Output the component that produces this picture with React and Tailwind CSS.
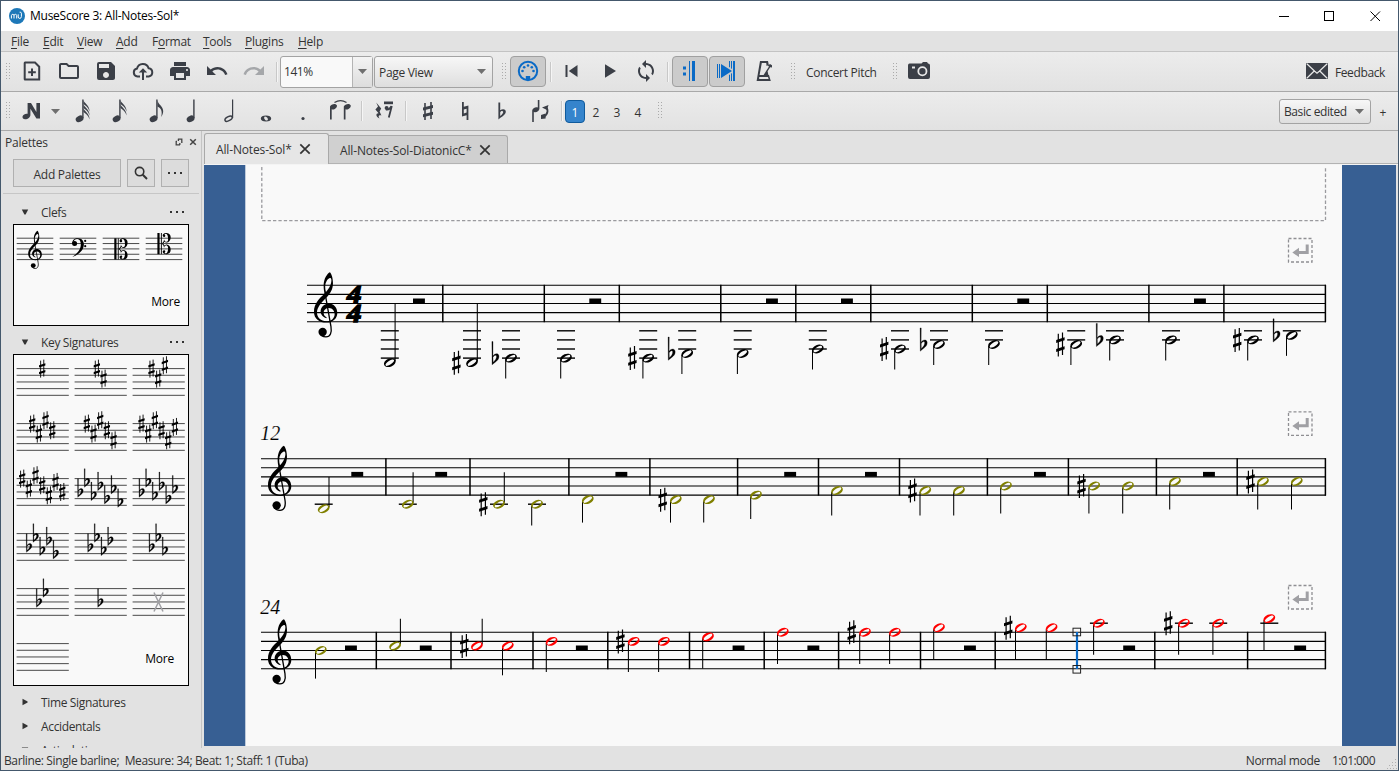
import React from 'react';
import {
  MdOutlineFolder,
  MdSave,
  MdPrint,
  MdUndo,
  MdRedo,
  MdSync,
} from 'react-icons/md';

const INK = '#3b3f47';
const BLUE = '#0a6ac6';
const OLIVE = '#808000';
const RED = '#ff0000';

/* ---------- Music glyphs, drawn for a staff space of 9.1px ---------- */

const HEAD =
  'M-5.66,2.28A6.1,4.1 -22 1 1 5.66,-2.28A6.1,4.1 -22 1 1 -5.66,2.28ZM-4.1,2.6A4.9,1.7 -33 1 0 4.1,-2.6A4.9,1.7 -33 1 0 -4.1,2.6Z';

function Sharp({ x, y, s = 1 }) {
  return (
    <g transform={`translate(${x} ${y}) scale(${s})`}>
      <path d="M-2.1,-10.6V12M2.1,-12V10.6" stroke="#000" strokeWidth="1.2" fill="none" />
      <path d="M-4.2,-3.4L4.2,-6.2V-3.2L-4.2,-.4ZM-4.2,5.6L4.2,2.8V5.8L-4.2,8.6Z" transform="translate(0 -1)" />
    </g>
  );
}

function Flat({ x, y, s = 1 }) {
  return (
    <g transform={`translate(${x} ${y}) scale(${s})`}>
      <path
        fillRule="evenodd"
        stroke="#000"
        strokeWidth="0.3"
        d="M0,-16.5H1.1L1,-2.2C2.2,-3.9 3.9,-4.7 5.3,-4.4C7.5,-3.8 7.6,-.6 6,1.6C4.6,3.5 2.2,4.8 .2,6.7ZM1.1,-.8L1.2,4.2C3.2,2.5 4.9,.1 4.6,-1.9C4.4,-3.5 2.3,-3 1.1,-.8Z"
      />
    </g>
  );
}

function TrebleClef({ x, y, s = 1 }) {
  return (
    <g transform={`translate(${x} ${y}) scale(${s / 3})`}>
      <path
        fillRule="evenodd"
        d="M50,-121C42,-118 31,-101 31,-82C31,-72 32,-64 34,-57C18,-42 2,-27 2,-2C2,18 18,30 39,30C59,30 72,17 72,1C72,-15 61,-27 47,-27C32,-27 22,-15 22,-3C22,7 30,14 39,17L40,14C34,11 31,6 31,1C31,-8 38,-14 47,-14C58,-14 64,-4 64,4C64,18 53,26 39,26C23,26 11,15 11,0C11,-16 24,-30 38,-44C51,-56 59,-70 59,-88C59,-103 55,-116 50,-121ZM38,-62C35,-73 34,-85 40,-95C44,-102 52,-108 54,-100C56,-89 48,-72 38,-62Z"
      />
      <path d="M35,-60L53,42C56,60 51,73 38,73C29,73 22,68 20,60" fill="none" stroke="#000" strokeWidth="4" />
      <circle cx="28" cy="58" r="12.5" />
    </g>
  );
}

function Rest({ x, top }) {
  return <rect x={x} y={top + 13.2} width="11.9" height="4.8" />;
}

function Note({ x, p, top, color = '#000', up, end, len = 20.5, acc, ax }) {
  const y = top + p * 4.55;
  const ledgers = [];
  for (let k = 10; k <= p; k += 2) ledgers.push(k);
  for (let k = -2; k >= p; k -= 2) ledgers.push(k);
  const stop = end ?? y + len;
  return (
    <g>
      {ledgers.map((k) => (
        <path key={k} d={`M${x - 9},${top + k * 4.55}h18`} stroke="#000" strokeWidth="1.4" />
      ))}
      <path
        d={up ? `M${x + 5.3},${y - 1.5}V${up}` : `M${x - 5.3},${y + 1.5}V${stop}`}
        stroke="#000"
        strokeWidth="1.05"
      />
      <path transform={`translate(${x} ${y})`} d={HEAD} fill={color} fillRule="evenodd" />
      {acc === '#' && <Sharp x={ax} y={y} />}
      {acc === 'b' && <Flat x={ax} y={y} />}
    </g>
  );
}

const SYSTEMS = [
  {
    top: 285.3,
    left: 307,
    clef: 313.3,
    time: true,
    bars: [442.8, 544.3, 619.3, 720.8, 795.8, 870.8, 972.3, 1047.3, 1148.9, 1223.9, 1325.4],
    rests: [413, 589.3, 766, 841, 1017.3, 1194],
    notes: [
      { x: 389.8, p: 17, up: 303.5 },
      { x: 472, p: 17, up: 303.5, acc: '#', ax: 456.4 },
      { x: 511, p: 16, acc: 'b', ax: 491.9 },
      { x: 566, p: 16 },
      { x: 648.2, p: 16, acc: '#', ax: 632.4 },
      { x: 687.2, p: 15, acc: 'b', ax: 668.1 },
      { x: 742.7, p: 15 },
      { x: 817.8, p: 14 },
      { x: 900, p: 14, acc: '#', ax: 884.2 },
      { x: 939, p: 13, acc: 'b', ax: 920.1 },
      { x: 994, p: 13 },
      { x: 1076.2, p: 13, acc: '#', ax: 1060.4 },
      { x: 1115, p: 12, acc: 'b', ax: 1096.2 },
      { x: 1171, p: 12 },
      { x: 1253, p: 12, acc: '#', ax: 1237.2 },
      { x: 1291.8, p: 11, acc: 'b', ax: 1273 },
    ],
  },
  {
    top: 458.7,
    left: 261,
    clef: 267.3,
    number: '12',
    bars: [385.9, 470, 568.9, 649.9, 737.6, 818.5, 899.5, 987.4, 1068.4, 1156.4, 1237.2, 1325.4],
    rests: [351.3, 435.2, 615.4, 784.2, 865, 1034, 1203],
    notes: [
      { x: 323.7, p: 11, up: 477, color: OLIVE },
      { x: 407.8, p: 10, up: 472.3, color: OLIVE },
      { x: 499, p: 10, up: 472.3, color: OLIVE, acc: '#', ax: 483.3 },
      { x: 537, p: 10, end: 525.6, color: OLIVE },
      { x: 587.8, p: 9, end: 522.6, color: OLIVE },
      { x: 675.8, p: 9, end: 522.6, color: OLIVE, acc: '#', ax: 662.7 },
      { x: 709, p: 9, end: 522.6, color: OLIVE },
      { x: 756, p: 8, end: 519, color: OLIVE },
      { x: 837, p: 7, end: 515.5, color: OLIVE },
      { x: 925.3, p: 7, end: 515.5, color: OLIVE, acc: '#', ax: 912.5 },
      { x: 959, p: 7, end: 515.5, color: OLIVE },
      { x: 1006, p: 6, end: 513.5, color: OLIVE },
      { x: 1094.2, p: 6, end: 513.5, color: OLIVE, acc: '#', ax: 1081.5 },
      { x: 1128, p: 6, end: 513.5, color: OLIVE },
      { x: 1175, p: 5, end: 509.5, color: OLIVE },
      { x: 1263, p: 5, end: 509.5, color: OLIVE, acc: '#', ax: 1250.5 },
      { x: 1296.8, p: 5, end: 509.5, color: OLIVE },
    ],
  },
  {
    top: 632.3,
    left: 261,
    clef: 267.3,
    number: '24',
    bars: [376.3, 451, 533, 607.8, 689.5, 764.2, 838.6, 920.5, 995.2, 1154.8, 1247.6, 1325.4],
    rests: [345, 419.8, 575.9, 732.6, 807.4, 964, 1123.2, 1294.2],
    notes: [
      { x: 320.8, p: 4, end: 678.6, color: OLIVE },
      { x: 395.1, p: 3, up: 618.8, color: OLIVE },
      { x: 476.9, p: 3, up: 618.8, color: RED, acc: '#', ax: 464.3 },
      { x: 507.8, p: 3, end: 675.3, color: RED },
      { x: 551.6, p: 2, end: 672, color: RED },
      { x: 633.7, p: 2, end: 672, color: RED, acc: '#', ax: 620.4 },
      { x: 663.9, p: 2, end: 672, color: RED },
      { x: 708, p: 1, end: 668.6, color: RED },
      { x: 782.8, p: 0, end: 664, color: RED },
      { x: 865, p: 0, end: 664, color: RED, acc: '#', ax: 851.7 },
      { x: 894.9, p: 0, end: 664, color: RED },
      { x: 939, p: -1, end: 659.4, color: RED },
      { x: 1020.8, p: -1, end: 659.4, color: RED, acc: '#', ax: 1008.2 },
      { x: 1051.6, p: -1, end: 659.4, color: RED },
      { x: 1098.9, p: -2, end: 654.7, color: RED },
      { x: 1183.9, p: -2, end: 654.7, color: RED, acc: '#', ax: 1168.2 },
      { x: 1218.2, p: -2, end: 654.7, color: RED },
      { x: 1269.3, p: -3, end: 650, color: RED },
    ],
  },
];

function System({ sys }) {
  const { top, left } = sys;
  const bottom = top + 36.4;
  return (
    <g>
      {[0, 1, 2, 3, 4].map((k) => (
        <path key={k} d={`M${left},${top + k * 9.1}H1326`} stroke="#000" strokeWidth="1.1" />
      ))}
      {sys.bars.map((x) => (
        <path key={x} d={`M${x},${top - 0.5}V${bottom + 0.5}`} stroke="#000" strokeWidth="1.5" />
      ))}
      <TrebleClef x={sys.clef} y={top + 27.3} />
      {sys.time &&
        [18, 36.2].map((dy) => (
          <text
            key={dy}
            transform={`translate(354.2 ${top + dy}) scale(1.12 1)`}
            textAnchor="middle"
            fontFamily="Liberation Serif, serif"
            fontWeight="700"
            fontStyle="italic"
            fontSize="26"
            stroke="#000"
            strokeWidth="1.3"
          >
            4
          </text>
        ))}
      {sys.number && (
        <text
          x="260.3"
          y={top - 18.6}
          fontFamily="Liberation Serif, serif"
          fontStyle="italic"
          fontSize="20"
          stroke="#f9f9f9"
          strokeWidth="0.12"
        >
          {sys.number}
        </text>
      )}
      {sys.rests.map((x) => (
        <Rest key={x} x={x} top={top} />
      ))}
      {sys.notes.map((n) => (
        <Note key={n.x} top={top} {...n} />
      ))}
      <g transform={`translate(1288.5 ${top - 46.8})`}>
        <rect width="23.5" height="23.5" fill="none" stroke="#8f8f93" strokeWidth="1.3" strokeDasharray="3 2" />
        <path d="M3.8,14L10.5,9.3V12.4H17.2V6H20.2V15.4H10.5V18.6Z" fill="#a0a0a4" />
      </g>
    </g>
  );
}

function Score() {
  return (
    <svg className="block shrink-0" width="1192" height="581" viewBox="204 165 1192 581">
      <rect x="204" y="165" width="1192" height="581" fill="#375f93" />
      <rect x="245.3" y="165" width="1096.7" height="581" fill="#f9f9f9" />
      <path d="M261.8,167V220.6H1325.5V167" fill="none" stroke="#9a9a9e" strokeWidth="1.3" strokeDasharray="3.3 2.1" />
      {SYSTEMS.map((s) => (
        <System key={s.top} sys={s} />
      ))}
      <path d="M1077,632V669" stroke={BLUE} strokeWidth="2.2" />
      <rect x="1073" y="628.2" width="7.6" height="7.6" fill="none" stroke="#222" />
      <rect x="1073" y="665.5" width="7.6" height="7.6" fill="none" stroke="#222" />
    </svg>
  );
}

/* ---------- Palettes ---------- */

function CellStaff({ x1, x2, top, gap }) {
  return [0, 1, 2, 3, 4].map((k) => (
    <path key={k} d={`M${x1},${top + k * gap}H${x2}`} stroke="#4a4a4a" strokeWidth="1" />
  ));
}

function CClef({ x, y }) {
  return (
    <g transform={`translate(${x} ${y})`}>
      <rect x="0" y="-10.6" width="2.2" height="21.2" />
      <rect x="3.5" y="-10.6" width=".9" height="21.2" />
      {[1, -1].map((d) => (
        <g key={d} transform={`scale(1 ${d})`}>
          <path
            fillRule="evenodd"
            d="M4.4,-.2C6,-1.4 6.4,-2.6 6.6,-4.2C7.2,-2.2 8.6,-1.6 9.4,-1.8C10.9,-2.3 10.8,-4.4 10.6,-6.2C10.3,-8.8 9.4,-10 8.2,-9.8C7.5,-9.7 7.1,-9.3 7.3,-8.8C8.4,-8.2 8,-6.6 6.8,-6.6C5.4,-6.6 5,-8 5.5,-9C6.2,-10.4 7.8,-10.8 9.3,-10.6C12,-10.3 13.4,-8.5 13.3,-6C13.2,-3 11.3,-.8 9,-1C8.1,-1.1 7.5,-1.6 7,-1.9C6.6,-1 6,-.4 5.4,0H4.4Z"
          />
        </g>
      ))}
    </g>
  );
}

function ClefCell({ kind }) {
  return (
    <svg width="43" height="50" viewBox="0 0 43 50">
      <CellStaff x1={2.7} x2={39.3} top={13.2} gap={5.35} />
      {kind === 'treble' && <TrebleClef x={13.8} y={29.3} s={0.585} />}
      {kind === 'bass' && (
        <g>
          <circle cx="17.6" cy="18.6" r="2.5" />
          <path d="M15.2,18.5C15,15.2 17.8,13 21,13.2C25.2,13.4 27.3,16.5 26.8,20.5C26.2,25.6 21.5,29.8 15.3,32C20,28.8 23.6,24.8 23.8,19.8C23.9,16.5 22.8,14.1 20.3,14.1C18.1,14.1 16.3,15.6 16.4,18Z" />
          <circle cx="28.2" cy="15.9" r="1.1" />
          <circle cx="28.2" cy="21.2" r="1.1" />
        </g>
      )}
      {kind === 'alto' && <CClef x={14.3} y={23.9} />}
      {kind === 'tenor' && <CClef x={14.4} y={18.6} />}
    </svg>
  );
}

const SHARPS = [0, 3, -1, 2, 5, 1, 4];
const FLATS = [4, 1, 5, 2, 6, 3, 7];

function KeyCell({ n = 0, cross }) {
  const count = Math.abs(n);
  const list = (n > 0 ? SHARPS : FLATS).slice(0, count);
  const start = 28.5 - ((count - 1) * 6.68) / 2;
  return (
    <svg width="58" height="55" viewBox="0 0 58 55">
      <CellStaff x1={2.6} x2={54.8} top={13.6} gap={6.68} />
      {list.map((p, i) =>
        n > 0 ? (
          <Sharp key={i} x={start + i * 6.68 - 0.3} y={13.6 + p * 3.34} s={0.75} />
        ) : (
          <Flat key={i} x={start + i * 6.68 - 2.9} y={13.6 + p * 3.34} s={0.8} />
        ),
      )}
      {cross && <path d="M24,17.5L33,36.5M33,17.5L24,36.5" stroke="#a0a0a4" strokeWidth="1.5" />}
    </svg>
  );
}

const KEYS = [1, 2, 3, 4, 5, 6, 7, -7, -6, -5, -4, -3, -2, -1];

function Dots({ className = '' }) {
  return (
    <svg className={className} width="16" height="4" viewBox="0 0 16 4" fill="#333">
      <rect x="1" y="1" width="2" height="2" />
      <rect x="7" y="1" width="2" height="2" />
      <rect x="13" y="1" width="2" height="2" />
    </svg>
  );
}

function PaletteHead({ label, open }) {
  return (
    <div className="flex h-6 shrink-0 items-center pl-[20px] pr-[16px]">
      <svg className="shrink-0" width="8" height="8" viewBox="0 0 8 8" fill="#333">
        {open ? <path d="M.8,1.5H7.2L4.6,6.6H3.4Z" /> : <path d="M1.5,.8V7.2L6.6,4.6V3.4Z" />}
      </svg>
      <span className="ml-[12px] flex-1 pt-px">{label}</span>
      {open && <Dots />}
    </div>
  );
}

function Sidebar() {
  return (
    <aside className="-mb-[2px] flex w-[201px] shrink-0 flex-col overflow-hidden border-r border-[#c4c4c4] tracking-[-0.35px]">
      <div className="flex h-[22px] shrink-0 items-center pl-1">
        <span className="flex-1 pt-0.5 tracking-[-0.25px]">Palettes</span>
        <svg width="8" height="8" viewBox="0 0 8 8" fill="none" stroke="#444" strokeWidth="1.3">
          <path d="M3,1.2H6.8V5M5,6.8H1.2V3M3.4,.8V3M.8,3.4H2M4.8,5V7" />
        </svg>
        <svg className="ml-[6px] mr-[4px]" width="8" height="8" viewBox="0 0 8 8" stroke="#444" strokeWidth="1.5">
          <path d="M1.2,1.2L6.8,6.8M6.8,1.2L1.2,6.8" />
        </svg>
      </div>
      <div className="mt-1.5 flex h-7 shrink-0 gap-1.5 pl-3">
        <button className="w-[108px] border border-[#b0b0b0] bg-[#dcdcdc] pt-[3px] tracking-[-0.25px]">Add Palettes</button>
        <button className="flex w-7 items-center justify-center border border-[#b0b0b0] bg-[#dcdcdc]">
          <svg width="14" height="14" viewBox="0 0 14 14" fill="none" stroke="#333" strokeWidth="1.6">
            <circle cx="5.6" cy="5.6" r="4.2" />
            <path d="M8.8,8.8L13,13" strokeWidth="2" />
          </svg>
        </button>
        <button className="flex w-7 items-center justify-center border border-[#b0b0b0] bg-[#dcdcdc]">
          <Dots />
        </button>
      </div>
      <div className="ml-0.5 mr-0.5 mt-1.5 h-px shrink-0 bg-[#c6c6c6]" />
      <div className="mt-[6px] flex min-h-0 flex-1 flex-col overflow-hidden">
        <PaletteHead label="Clefs" open />
        <div className="ml-3 h-[102px] w-[176px] shrink-0 border border-black bg-[#f9f9f9] text-black">
          <div className="flex h-[69px]">
            <ClefCell kind="treble" />
            <ClefCell kind="bass" />
            <ClefCell kind="alto" />
            <ClefCell kind="tenor" />
          </div>
          <div className="pr-[8px] text-right tracking-[-0.2px]">More</div>
        </div>
        <div className="mt-1">
          <PaletteHead label="Key Signatures" open />
        </div>
        <div className="ml-3 grid h-[332px] w-[176px] shrink-0 grid-cols-3 content-start border border-black bg-[#f9f9f9] text-black">
          {KEYS.map((n) => (
            <KeyCell key={n} n={n} />
          ))}
          <KeyCell cross />
          <KeyCell />
          <span />
          <div className="pr-[14px] pt-[21px] text-right tracking-[-0.2px]">More</div>
        </div>
        <div className="mt-1 flex shrink-0 flex-col">
          <PaletteHead label="Time Signatures" />
          <PaletteHead label="Accidentals" />
          <PaletteHead label="Articulations" open />
        </div>
      </div>
    </aside>
  );
}

/* ---------- Toolbars ---------- */

function Handle({ className = '' }) {
  return (
    <svg className={`shrink-0 ${className}`} width="6" height="18" viewBox="0 0 6 18" fill="#aaaaaa">
      {[0, 1, 2, 3, 4, 5].map((k) => (
        <g key={k}>
          <rect x="0" y={k * 3} width="1" height="1" />
          <rect x="3" y={k * 3} width="1" height="1" />
        </g>
      ))}
    </svg>
  );
}

function Sep({ className = '' }) {
  return <span className={`h-5 w-0.5 shrink-0 border-l border-r border-l-[#c8c8c8] border-r-[#f5f5f5] ${className}`} />;
}

function Slot({ children, className = 'w-[37px]' }) {
  return <span className={`flex h-8 shrink-0 items-center justify-center ${className}`}>{children}</span>;
}

function Icon({ children, w = 24, h = 24, fill = INK }) {
  return (
    <svg width={w} height={h} viewBox={`0 0 ${w} ${h}`} fill={fill}>
      {children}
    </svg>
  );
}

function Caret() {
  return (
    <svg width="9" height="5" viewBox="0 0 9 5" fill="#6f6f6f">
      <path d="M0,0H9L4.5,5Z" />
    </svg>
  );
}

const ON = 'h-[31px] w-[36px] rounded-sm border border-[#a0a0a0] bg-[#cbcbcb]';

function FileBar() {
  return (
    <div className="flex h-10 shrink-0 items-center border-b border-[#a9a9a9] bg-gradient-to-b from-[#ececec] to-[#e2e2e2] pl-[5px] [&>span>svg]:mb-px">
      <Handle className="mr-[1px]" />
      <Slot>
        <Icon>
          <path fill="none" stroke={INK} strokeWidth="2" d="M5,3.5H15L19.2,7.7V20.5H5Q4.7,20.5 4.7,20V4Q4.7,3.5 5,3.5Z" />
          <path d="M11,9.5H13V12.2H15.8V14.2H13V17H11V14.2H8.2V12.2H11Z" />
        </Icon>
      </Slot>
      <Slot><MdOutlineFolder size={24} color={INK} /></Slot>
      <Slot><MdSave size={24} color={INK} /></Slot>
      <Slot>
        <Icon>
          <path
            fill="none"
            stroke={INK}
            strokeWidth="2"
            d="M9,17.5H6.5A4,4 0 0 1 6,9.6A6,6 0 0 1 17.6,9.2A4.2,4.2 0 0 1 17.8,17.5H15"
          />
          <path d="M11,21V13.6H7.8L12,9.3L16.2,13.6H13V21Z" />
        </Icon>
      </Slot>
      <Slot><MdPrint size={24} color={INK} /></Slot>
      <Slot><MdUndo size={24} color={INK} /></Slot>
      <Slot><MdRedo size={24} color="#a5a7aa" /></Slot>
      <Sep className="ml-[4px]" />
      <div className="ml-[2px] flex h-8 w-[93px] rounded-[3px] border border-[#a3a3a3] bg-[#f9f9f9]">
        <span className="flex-1 pl-[3px] pt-[7px] tracking-[-0.45px]">141%</span>
        <span className="flex w-[20px] items-center justify-center border-l border-[#b4b4b4] bg-gradient-to-b from-[#f4f4f4] to-[#dddddd]">
          <Caret />
        </span>
      </div>
      <div className="ml-px flex h-8 w-[119px] items-center justify-between rounded-[3px] border border-[#a3a3a3] bg-gradient-to-b from-[#f7f7f7] to-[#dedede] pl-1 pr-[6px]">
        <span className="pt-0.5 tracking-[-0.3px]">Page View</span>
        <Caret />
      </div>
      <Handle className="ml-[9px]" />
      <Slot className={`ml-[2px] ${ON}`}>
        <Icon fill={BLUE}>
          <circle cx="12" cy="12" r="9.2" fill="none" stroke={BLUE} strokeWidth="2" />
          <circle cx="6.5" cy="12" r="1.3" />
          <circle cx="8.2" cy="8.2" r="1.3" />
          <circle cx="12" cy="6.5" r="1.3" />
          <circle cx="15.8" cy="8.2" r="1.3" />
          <circle cx="17.5" cy="12" r="1.3" />
          <rect x="9.8" y="17" width="4.4" height="4" />
        </Icon>
      </Slot>
      <Sep className="ml-[4px]" />
      <Slot className="w-[38px]">
        <Icon>
          <path d="M6,6H8V18H6ZM18,6V18L9.3,12Z" transform="translate(.5 0)" />
        </Icon>
      </Slot>
      <Slot><Icon><path d="M8,5.2L19,12L8,18.8Z" /></Icon></Slot>
      <Slot><MdSync size={24} color={INK} /></Slot>
      <Sep className="ml-[3px]" />
      <Slot className={`ml-[3px] ${ON}`}>
        <Icon fill={BLUE}>
          <path d="M15,2H18V22H15ZM12,2H13V22H12ZM6,7.5H9V10.5H6ZM6,13.5H9V16.5H6Z" transform="translate(-1 0)" />
        </Icon>
      </Slot>
      <Slot className={`ml-px ${ON}`}>
        <Icon fill={BLUE}>
          <path d="M2,5H3V19H2ZM4,5H5V19H4ZM6,5L17,12L6,19ZM14,2H15V8.6L14,8ZM14,16L15,15.4V22H14ZM16,2H17V10L16,9.3ZM16,14.7L17,14V22H16ZM18,2H20V22H18Z" />
        </Icon>
      </Slot>
      <Slot className="w-[38px]">
        <Icon>
          <path fillRule="evenodd" d="M8,2H16L16.8,6L14.6,7L14.2,4H9.8L7.6,16H11.6L17,7.4L15.8,6.8L18,5L20,6.2V8.6L18.2,8.2L15.6,12.3L16.4,16H17L18.8,22H4.6ZM7.2,18V20H16.6L16,18Z" />
        </Icon>
      </Slot>
      <Handle className="ml-[8px]" />
      <span className="ml-[9px] w-[71px] whitespace-nowrap pt-0.5 tracking-[-0.3px]">Concert Pitch</span>
      <Handle className="ml-[16px]" />
      <Slot className="w-[40px]">
        <Icon>
          <path
            fillRule="evenodd"
            d="M2.5,4.5H14.5L16,3H20L21,4.5Q23,4.5 23,6.5V18Q23,20 21,20H3Q1,20 1,18V6.5Q1,4.5 2.5,4.5ZM5,7.5V9.5H8V7.5ZM15.4,7.2A5,5 0 1 0 15.4,17.2A5,5 0 1 0 15.4,7.2ZM15.4,9A3.2,3.2 0 1 1 15.4,15.4A3.2,3.2 0 1 1 15.4,9Z"
          />
        </Icon>
      </Slot>
      <span className="flex-1" />
      <svg className="mb-px" width="22" height="16" viewBox="0 0 22 16">
        <rect width="22" height="16" rx="1" fill={INK} />
        <path d="M.8,.8L8.7,8.3L11,10.3L13.3,8.3L21.2,.8M.8,15.2L8.2,8M21.2,15.2L13.8,8" fill="none" stroke="#e8e8e8" strokeWidth="1.2" />
      </svg>
      <span className="ml-[7px] mr-[13px] pt-[3px] tracking-[-0.37px]">Feedback</span>
    </div>
  );
}

function ToolNote({ flags = 0, open }) {
  return (
    <Icon w={24} h={26}>
      {open ? (
        <ellipse cx="10.6" cy="20.7" rx="4" ry="2" transform="rotate(-28 10.6 20.7)" fill="none" stroke={INK} strokeWidth="1.4" />
      ) : (
        <ellipse cx="9.6" cy="20.8" rx="4.1" ry="3" transform="rotate(-28 9.6 20.8)" />
      )}
      <path d={open ? 'M14,1.5H15.2V20H14Z' : 'M12.2,1.5H13.6V20H12.2Z'} />
      {Array.from({ length: flags }, (_, k) => (
        <path
          key={k}
          transform={`translate(0 ${k * 4})`}
          d={
            flags === 1
              ? 'M13.4,2C14,6.5 19,8 19.2,13C19.2,15.5 18.2,17.3 17.2,19C18.6,13.8 17.2,10 13.4,8.6Z'
              : 'M13.4,2C14,5.5 19.4,6.5 19.6,13.4C18.4,9.5 15.6,7.6 13.4,6Z'
          }
        />
      ))}
    </Icon>
  );
}

function NoteBar() {
  return (
    <div className="flex h-[39px] shrink-0 items-center border-b border-[#a9a9a9] bg-gradient-to-b from-[#ececec] to-[#e2e2e2] pl-[5px]">
      <Handle className="mr-[1px]" />
      <Slot>
        <Icon>
          <path d="M7.6,4H11L16.4,13V4H20V19.5H16.4L10.4,9.8V16C10.4,18 8,20.3 5.2,20.3C3,20.3 2.1,18.8 2.6,17.3C3.3,15.2 5.8,14.3 7.6,14.8Z" />
        </Icon>
      </Slot>
      <Slot className="mr-[3px] w-[10px]"><Caret /></Slot>
      <Slot><ToolNote flags={3} /></Slot>
      <Slot><ToolNote flags={2} /></Slot>
      <Slot><ToolNote flags={1} /></Slot>
      <Slot><ToolNote /></Slot>
      <Slot><ToolNote open /></Slot>
      <Slot className="w-[36px]">
        <Icon w={24} h={26}>
          <path fillRule="evenodd" d="M12,17.4C15.2,17.4 17.2,18.7 17.2,20.4S15.2,23.5 12,23.5S6.8,22.2 6.8,20.4S8.8,17.4 12,17.4ZM11,18.4C9.4,18.9 10.2,22.3 13,22.5C14.9,22.2 13.8,18.6 11,18.4Z" />
        </Icon>
      </Slot>
      <Slot><Icon w={24} h={26}><circle cx="12" cy="20.5" r="1.6" /></Icon></Slot>
      <Slot>
        <Icon w={26} h={26}>
          <path d="M3,21.5V8.6C4,6 9,4.8 10,7.6C10.2,10.6 6.4,12.4 4.7,11.2V21.5ZM16.8,21.5V8.6C17.8,6 22.8,4.8 23.8,7.6C24,10.6 20.2,12.4 18.5,11.2V21.5Z" />
          <path d="M7.5,4.5Q13.5,.8 19.5,4.5" fill="none" stroke={INK} strokeWidth="1.3" />
        </Icon>
      </Slot>
      <Sep className="ml-[3px]" />
      <Slot className="w-[42px]">
        <Icon w={26} h={26}>
          <path d="M5.2,4.5L10.2,10.5L8.6,13.5L10.4,17.5C7.6,16.4 6.8,18.4 8.6,20.5C4.4,18.8 4.6,15 7.8,15.4L4.4,11.6L7,8.5Z" />
          <path d="M13,3.5H22V6.2H13Z" />
          <circle cx="15.6" cy="10" r="2" />
          <path d="M15,11.5Q18.5,12.2 20.4,8.2M20.8,8L17.8,19.6" fill="none" stroke={INK} strokeWidth="1.8" />
        </Icon>
      </Slot>
      <Sep />
      <Slot className="w-[42px]">
        <Icon>
          <path d="M9,4V21M15,3V20" stroke={INK} strokeWidth="1.6" />
          <path d="M7,8.5L17,6V9L7,11.5ZM7,15.3L17,12.8V15.8L7,18.3Z" />
        </Icon>
      </Slot>
      <Slot className="w-[32px]">
        <Icon>
          <path d="M9,3H10.8V7.8L15.4,6.6V21H13.6V16.2L9,17.4ZM10.8,10.6V14.4L13.6,13.6V9.8Z" fillRule="evenodd" />
        </Icon>
      </Slot>
      <Slot className="w-[41px]">
        <Icon>
          <path fillRule="evenodd" d="M8.4,3.5H10.2V11.3C12,9.7 15.6,9.5 15.8,12.5C15.9,15.8 11.4,18 8.4,20.4ZM10.2,13.2V17C12,15.8 13.4,14 13.2,12.8C12.8,11.4 11,11.8 10.2,13.2Z" />
        </Icon>
      </Slot>
      <Slot className="w-[36px]">
        <Icon w={24} h={26}>
          <path d="M9.8,2H11.4V11C11,13.5 7.4,15.3 5.8,13.8V24H4.2V12.6C4.4,10.2 8,8.4 9.8,9.6Z" />
          <path d="M17.6,9.4C20.2,10.6 20.6,15.6 16,18.6" fill="none" stroke={INK} strokeWidth="1.8" />
          <path d="M14,9.5L20.5,7L19,12ZM13,17L17.6,15.6V20.6L13,21Z" />
        </Icon>
      </Slot>
      <Sep className="ml-[3px]" />
      <span className="ml-[2px] flex h-[23px] w-[20px] items-center justify-center rounded-sm border border-[#0f5a9c] bg-[#3584cc] pt-[3px] text-white">1</span>
      <span className="w-[22px] pt-[3px] text-center">2</span>
      <span className="w-[20px] pt-[3px] text-center">3</span>
      <span className="w-[22px] pt-[3px] text-center">4</span>
      <Handle className="ml-[9px]" />
      <span className="flex-1" />
      <div className="flex h-[25px] w-[92px] items-center justify-between rounded-[3px] border border-[#a3a3a3] bg-gradient-to-b from-[#f7f7f7] to-[#dedede] pl-1 pr-[6px]">
        <span className="whitespace-nowrap pt-0.5 tracking-[-0.4px]">Basic edited</span>
        <Caret />
      </div>
      <span className="w-[27px] pt-[3px] pr-[3px] text-center">+</span>
    </div>
  );
}

const MENUS = [
  ['F', 'ile', '', 'w-[32px]'],
  ['E', 'dit', '', 'w-[34px]'],
  ['V', 'iew', '', 'w-[39px]'],
  ['A', 'dd', '', 'w-[36px]'],
  ['', 'F', 'ormat', 'w-[51px]'],
  ['T', 'ools', '', 'w-[42px]'],
  ['P', 'lugins', '', 'w-[53px]'],
  ['H', 'elp', '', 'w-[40px]'],
];

function TabClose() {
  return (
    <svg width="12" height="12" viewBox="0 0 12 12" stroke="#333" strokeWidth="1.7">
      <path d="M1.3,1.3L10.7,10.7M10.7,1.3L1.3,10.7" />
    </svg>
  );
}

export default function App() {
  return (
    <div className="flex h-[771px] w-[1399px] flex-col overflow-hidden border border-[#44586c] bg-[#e2e2e2] font-['Open_Sans','Noto_Sans',sans-serif] text-[12px] leading-[16px] text-[#333]">
      <header className="flex h-[30px] shrink-0 items-center bg-white text-black">
        <svg className="ml-[8px]" width="16" height="16" viewBox="0 0 16 16">
          <circle cx="8" cy="8" r="8" fill="#1d78b8" />
          <path
            d="M2.4,10.5V7.6Q2.6,6.3 3.8,6.3T5,7.6V10.5M5,7.6Q5.2,6.3 6.4,6.3T7.7,7.6V10.5M9.2,6.3V9Q9.4,10.6 10.9,10.4T12.4,8.5V5.2Q12.2,3.8 10.6,4.2"
            fill="none"
            stroke="#fff"
            strokeWidth="1"
          />
        </svg>
        <span className="ml-[5px] flex-1 tracking-[-0.25px]">MuseScore 3: All-Notes-Sol*</span>
        <svg className="mr-[16px]" width="104" height="12" viewBox="0 0 104 12" fill="none" stroke="#000" strokeWidth="1">
          <path d="M1,6.5H11" />
          <rect x="46.5" y="1.5" width="9" height="9" />
          <path d="M92.5,1.5L102,11M102,1.5L92.5,11" />
        </svg>
      </header>
      <nav className="flex h-[21px] shrink-0 items-center border-b border-[#c3c3c3] pl-[10px] pt-0.5 tracking-[-0.25px]">
        {MENUS.map(([a, b, c, w]) => (
          <span key={a + b} className={`${w} shrink-0`}>
            {a && <span className="underline underline-offset-2">{a}</span>}
            {c ? (
              <>
                {b}
                <span className="underline underline-offset-2">{c[0]}</span>
                {c.slice(1)}
              </>
            ) : (
              b
            )}
          </span>
        ))}
      </nav>
      <FileBar />
      <NoteBar />
      <div className="flex min-h-0 flex-1">
        <Sidebar />
        <main className="flex min-w-0 flex-1 flex-col pl-[2px]">
          <div className="flex h-[33px] shrink-0 items-end border-b border-[#b3b3b3]">
            <div className="-mb-px flex h-[31px] w-[125px] items-center rounded-t-[3px] border border-b-0 border-[#a9a9a9] bg-[#e6e6e6] pl-[11px]">
              <span className="w-[83px] whitespace-nowrap pt-0.5 tracking-[-0.15px]">All-Notes-Sol*</span>
              <TabClose />
            </div>
            <div className="flex h-[28px] w-[179px] items-center rounded-tr-[3px] border border-b-0 border-l-0 border-[#a9a9a9] bg-[#d0d0d0] pl-[11px]">
              <span className="w-[139px] whitespace-nowrap pt-0.5 tracking-[-0.15px]">All-Notes-Sol-DiatonicC*</span>
              <TabClose />
            </div>
          </div>
          <div className="h-px shrink-0 bg-[#f4f4f4]" />
          <Score />
        </main>
      </div>
      <footer className="flex h-6 shrink-0 items-center pl-[3px] tracking-[-0.3px]">
        <span className="flex-1 whitespace-pre pt-1.5 tracking-[-0.38px]">Barline: Single barline;  Measure: 34; Beat: 1; Staff: 1 (Tuba)</span>
        <span className="pt-1.5">Normal mode</span>
        <span className="ml-[12px] pt-1.5 tracking-[-0.55px]">1:01:000</span>
        <svg className="ml-[12px] self-end" width="11" height="11" viewBox="0 0 11 11" fill="#b0b0b0">
          <path d="M8,0h1v1H8ZM5,3h1v1H5ZM8,3h1v1H8ZM2,6h1v1H2ZM5,6h1v1H5ZM8,6h1v1H8ZM0,9h1v1H0ZM3,9h1v1H3ZM6,9h1v1H6ZM9,9h1v1H9Z" />
        </svg>
      </footer>
    </div>
  );
}
